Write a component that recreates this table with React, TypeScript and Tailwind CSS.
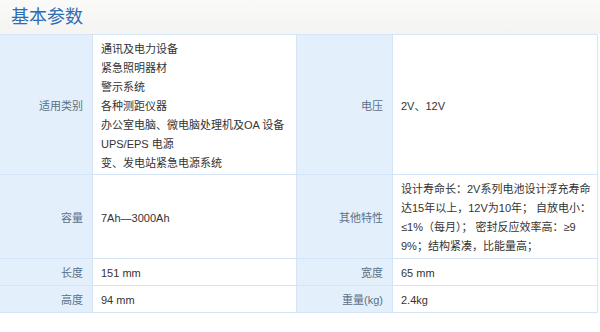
const FONT = "font-['Liberation_Sans','Noto_Sans_CJK_SC',sans-serif]";

const USES = [
  "通讯及电力设备",
  "紧急照明器材",
  "警示系统",
  "各种测距仪器",
  "办公室电脑、微电脑处理机及OA 设备",
  "UPS/EPS 电源",
  "变、发电站紧急电源系统",
];

const FEATURES = [
  "设计寿命长：2V系列电池设计浮充寿命",
  "达15年以上，12V为10年； 自放电小：",
  "≤1%（每月）； 密封反应效率高：≥9",
  "9%；结构紧凑，比能量高；",
];

function Label({ children, py = "pt-[5px] pb-[2px]" }: { children: React.ReactNode; py?: string }) {
  return (
    <div
      className={`flex items-center justify-end border-b border-r border-[#d3e5f6] bg-[#e3f0fc] pr-[9px] ${py} text-[#5b6f87]`}
    >
      {children}
    </div>
  );
}

function Value({ children, py = "pt-[5px] pb-[2px]" }: { children: React.ReactNode; py?: string }) {
  return (
    <div className={`flex items-center border-b border-r border-[#d3e5f6] bg-white pl-2 ${py} text-[#333]`}>
      <div>{children}</div>
    </div>
  );
}

export default function App() {
  return (
    <div className={`h-[332px] w-[600px] bg-white ${FONT}`}>
      <div className="flex h-[34px] items-center bg-gradient-to-b from-[#fafaf9] to-[#f4f4f2] pl-[11px]">
        <h2 className="text-[18px] leading-none text-[#2f6db3]">基本参数</h2>
      </div>
      <div className="grid w-[598px] grid-cols-[93px_204px_96px_205px] border-t border-[#d3e5f6] border-r-2 border-r-[#e3f0fc] text-[11px] leading-[19px]">
        <Label py="pt-[5px] pb-[1px]">适用类别</Label>
        <Value py="pt-[5px] pb-[1px]">
          {USES.map((u) => (
            <div key={u} className="whitespace-nowrap">{u}</div>
          ))}
        </Value>
        <Label py="pt-[5px] pb-[1px]">电压</Label>
        <Value py="pt-[5px] pb-[1px]">2V、12V</Value>

        <Label>容量</Label>
        <Value>7Ah—3000Ah</Value>
        <Label>其他特性</Label>
        <Value>
          {FEATURES.map((f) => (
            <div key={f} className="whitespace-nowrap">{f}</div>
          ))}
        </Value>

        <Label>长度</Label>
        <Value>151 mm</Value>
        <Label>宽度</Label>
        <Value>65 mm</Value>

        <Label>高度</Label>
        <Value>94 mm</Value>
        <Label>重量(kg)</Label>
        <Value>2.4kg</Value>
      </div>
    </div>
  );
}
